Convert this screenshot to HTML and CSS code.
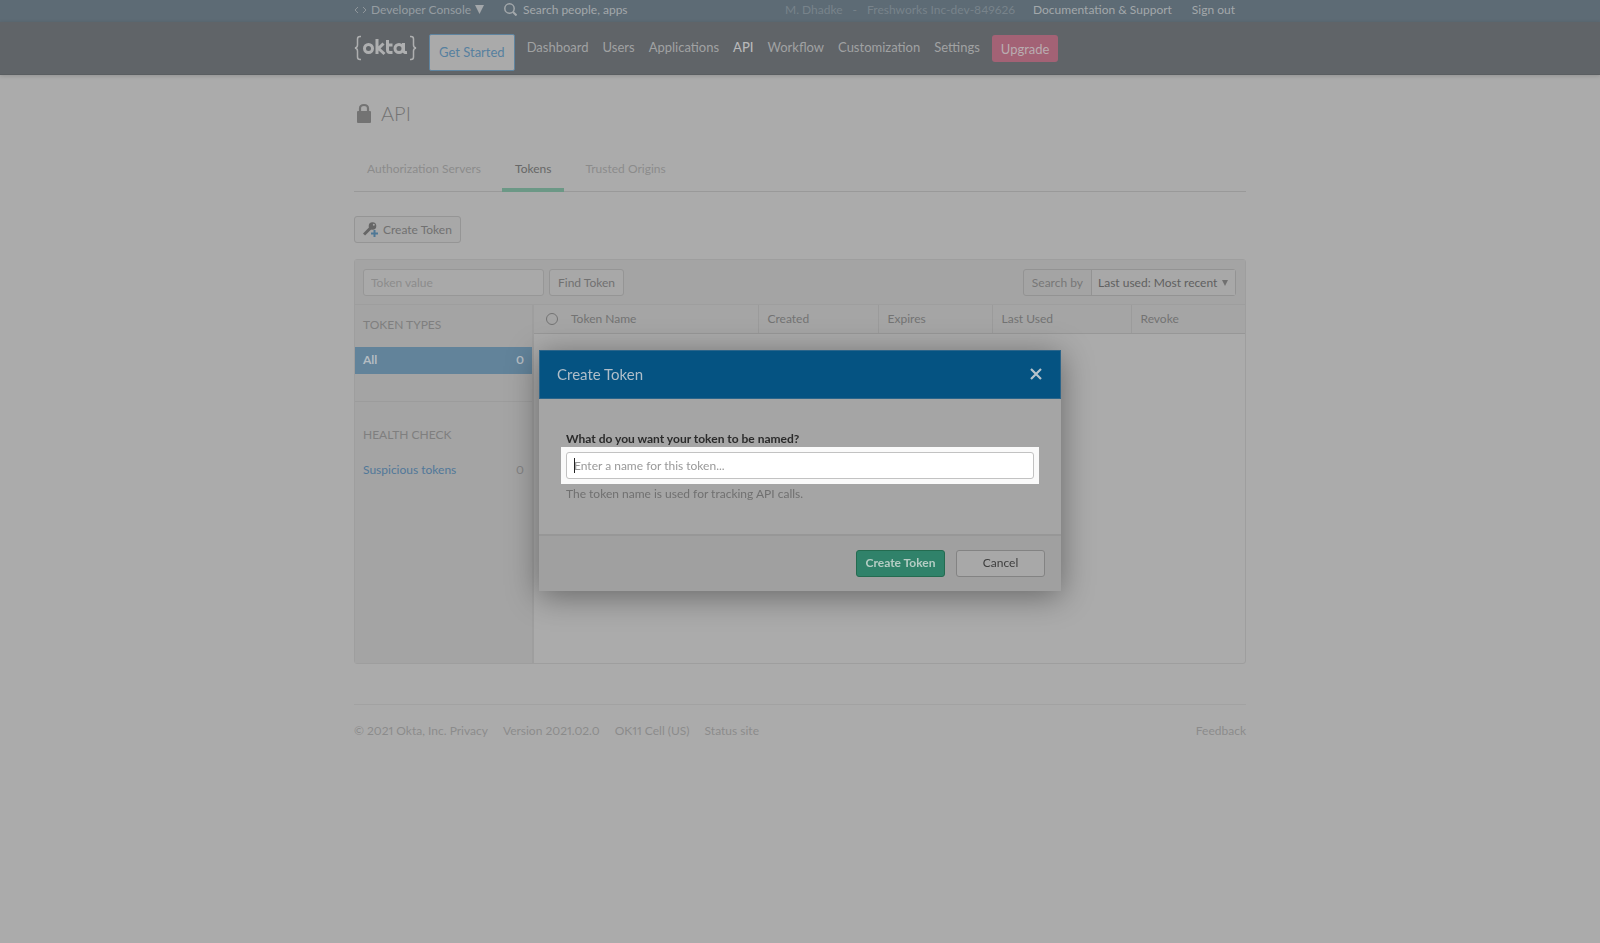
FILE: index.html
```html
<!DOCTYPE html>
<html lang="en">
<head>
    <meta charset="UTF-8">
    <meta name="viewport" content="width=device-width, initial-scale=1.0">
    <title>API - Tokens</title>
    <link rel="stylesheet" href="styles.css">
</head>
<body>
    <header>
        <div class="topbar">
            <div class="container topbar-inner">
                <button class="console">
                    <svg width="13" height="8" viewBox="0 0 13 8"><path d="M4 1 1 4l3 3M9 1l3 3-3 3" fill="none" stroke="#8f969b" stroke-width="1"/></svg>
                    Developer Console
                    <svg width="9" height="9" viewBox="0 0 9 9"><path d="M0 0h9L4.500 9z" fill="#a3a7aa"/></svg>
                </button>
                <label class="search">
                    <svg width="13" height="13" viewBox="0 0 13 13"><circle cx="5.500" cy="5.500" r="4.700" fill="none" stroke="#a3a8ab" stroke-width="1.500"/><path d="M9 9l3.500 3.500" stroke="#a3a8ab" stroke-width="2"/></svg>
                    <input type="text" placeholder="Search people, apps">
                </label>
                <div class="account">
                    <span>M. Dhadke</span>
                    <span>-</span>
                    <span>Freshworks Inc-dev-849626</span>
                </div>
                <a class="support" href="#">Documentation &amp; Support</a>
                <a href="#">Sign out</a>
            </div>
        </div>
        <div class="navbar">
            <nav class="container nav">
                <a class="logo" href="#" aria-label="okta">
                    <svg width="63" height="26" viewBox="0 0 63 26" fill="none" stroke="#aeafb0">
                        <path d="M7 1.500H6Q3.500 1.500 3.500 4V10Q3.500 12.500 1 13Q3.500 13.500 3.500 16V22Q3.500 24.500 6 24.500H7M56 1.500h1Q59.500 1.500 59.500 4V10Q59.500 12.500 62 13Q59.500 13.500 59.500 16V22Q59.500 24.500 57 24.500H56" stroke-width="1.500"/>
                        <g stroke-width="3">
                            <circle cx="14.500" cy="13.500" r="4"/>
                            <path d="M23 4V19M29.500 8.500 24.500 13.500 30.500 19M33.500 5V15Q33.500 17.500 36 17.500H38.500M33.500 10H38.500"/>
                            <circle cx="45" cy="13.500" r="4"/>
                            <path d="M49.500 8V15.500Q49.500 17.800 53 17.500"/>
                        </g>
                    </svg>
                </a>
                <a class="get-started" href="#">Get Started</a>
                <a href="#">Dashboard</a>
                <a href="#">Users</a>
                <a href="#">Applications</a>
                <a class="current" href="#">API</a>
                <a href="#">Workflow</a>
                <a href="#">Customization</a>
                <a href="#">Settings</a>
                <button class="upgrade">Upgrade</button>
            </nav>
        </div>
    </header>

    <main class="container">
        <h1>
            <svg width="14" height="20" viewBox="0 0 14 20"><path d="M3 9V5.500Q3 2 7 2T11 5.500V9" fill="none" stroke="#737373" stroke-width="2.200"/><rect y="8" width="14" height="12" rx="1" fill="#737373"/></svg>
            API
        </h1>
        <div class="tabs">
            <a href="#">Authorization Servers</a>
            <a class="active" href="#">Tokens</a>
            <a href="#">Trusted Origins</a>
        </div>
        <button class="btn create">
            <svg width="15" height="15" viewBox="0 0 15 15"><path d="M1 12.500 7.500 6" stroke="#666" stroke-width="3"/><circle cx="9.500" cy="4" r="3.800" fill="#666"/><circle cx="10.800" cy="2.800" r="1" fill="#a8a8a8"/><path d="M11.500 8v7M8 11.500h7" stroke="#4f7896" stroke-width="2"/></svg>
            Create Token
        </button>

        <section class="panel">
            <div class="toolbar">
                <input class="token-value" type="text" placeholder="Token value" aria-label="Token value">
                <button class="btn">Find Token</button>
                <div class="sort">
                    <label for="sort">Search by</label>
                    <div class="select-wrap">
                        <select id="sort">
                            <option>Last used: Most recent</option>
                        </select>
                        <svg width="6" height="6" viewBox="0 0 6 6"><path d="M0 0h6L3 6z" fill="#707070"/></svg>
                    </div>
                </div>
            </div>
            <div class="content">
                <aside>
                    <div class="group">
                        <h2>TOKEN TYPES</h2>
                        <a class="filter selected" href="#">All <span>0</span></a>
                    </div>
                    <div class="group">
                        <h2>HEALTH CHECK</h2>
                        <a class="filter" href="#">Suspicious tokens <span>0</span></a>
                    </div>
                </aside>
                <div class="results">
                    <table>
                        <colgroup>
                            <col class="col-icon">
                            <col class="col-name">
                            <col class="col-created">
                            <col class="col-expires">
                            <col class="col-used">
                            <col class="col-revoke">
                        </colgroup>
                        <thead>
                            <tr>
                                <th><i class="status"></i></th>
                                <th>Token Name</th>
                                <th>Created</th>
                                <th>Expires</th>
                                <th>Last Used</th>
                                <th>Revoke</th>
                            </tr>
                        </thead>
                    </table>
                </div>
            </div>
        </section>

        <footer>
            <span>© 2021 Okta, Inc. <a href="#">Privacy</a></span>
            <span>Version 2021.02.0</span>
            <span>OK11 Cell (US)</span>
            <a href="#">Status site</a>
            <a class="feedback" href="#">Feedback</a>
        </footer>
    </main>

    <div class="overlay">
        <form class="modal" role="dialog" aria-labelledby="modal-title">
            <div class="modal-header">
                <h2 id="modal-title">Create Token</h2>
                <button type="button" class="close" aria-label="Close">
                    <svg width="12" height="12" viewBox="0 0 12 12"><path d="M1 1l10 10M11 1L1 11" stroke="#b8c3cb" stroke-width="2.200"/></svg>
                </button>
            </div>
            <div class="modal-body">
                <label for="token-name">What do you want your token to be named?</label>
                <div class="field">
                    <input id="token-name" type="text" placeholder="Enter a name for this token...">
                </div>
                <p>The token name is used for tracking API calls.</p>
            </div>
            <div class="modal-footer">
                <button type="button" class="modal-btn primary">Create Token</button>
                <button type="button" class="modal-btn">Cancel</button>
            </div>
        </form>
    </div>
</body>
</html>
```

FILE: styles.css
```css
* {
    box-sizing: border-box;
}
body {
    margin: 0;
    min-height: 100vh;
    background: #ababab;
    color: #777;
    font-family: Lato, sans-serif;
    font-size: 12px;
    font-variant-numeric: proportional-nums;
    line-height: 16px;
}
a {
    color: inherit;
    text-decoration: none;
}
button, input, select {
    font: inherit;
    color: inherit;
    margin: 0;
}
button {
    cursor: pointer;
}
svg {
    display: block;
    flex: none;
}
.container {
    width: 100%;
    max-width: 892px;
    margin: 0 auto;
}

/* header */
.topbar {
    background: #5d6b75;
    color: #a3a8ab;
}
.topbar-inner {
    display: flex;
    align-items: center;
    height: 22px;
    padding: 0 11px 3px 0;
}
.console {
    display: flex;
    align-items: center;
    gap: 4px;
    padding: 0;
    border: none;
    background: none;
    width: 150px;
    color: #969da2;
}
.search {
    display: flex;
    align-items: center;
    gap: 6px;
    width: 281px;
}
.search input {
    width: 200px;
    padding: 0;
    border: none;
    background: none;
}
.search input::placeholder {
    color: #a3a8ab;
    opacity: 1;
}
.account {
    display: flex;
    gap: 10px;
    color: #78838b;
}
.support {
    margin-left: auto;
    margin-right: 20px;
}
.navbar {
    background: #606468;
    border-bottom: 1px solid #5a5e61;
    box-shadow: 0 1px 4px rgba(0, 0, 0, 0.15);
}
.nav {
    display: flex;
    align-items: flex-start;
    gap: 14px;
    height: 52px;
    padding-top: 12px;
    color: #a0a2a3;
    font-size: 13px;
}
.nav a {
    padding-top: 5px;
}
.nav .logo {
    padding-top: 1px;
    margin-right: -2px;
}
.nav .get-started {
    height: 37px;
    padding: 9px 9px 0;
    border: 1px solid #5f849f;
    border-radius: 2px;
    background: #aaa;
    color: #56809f;
    margin-right: -2px;
}
.nav .current {
    color: #b8b9ba;
    font-weight: 500;
}
.upgrade {
    height: 27px;
    padding: 0 9px;
    border: none;
    border-radius: 3px;
    background: #a36275;
    color: #b9adb1;
    margin: 1px 0 0 -2px;
}

/* page */
h1 {
    display: flex;
    align-items: center;
    gap: 10px;
    margin: 0;
    padding: 25px 0 0 3px;
    color: #737373;
    font-size: 20px;
    font-weight: 300;
    line-height: 26px;
}
.tabs {
    display: flex;
    gap: 8px;
    margin-top: 22px;
    border-bottom: 1px solid #999;
    color: #8b8b8b;
}
.tabs a {
    padding: 13px 13px 11px;
    border-bottom: 4px solid transparent;
    margin-bottom: -1px;
}
.tabs .active {
    color: #676767;
    border-color: #6c9886;
}
.btn {
    display: flex;
    align-items: center;
    gap: 5px;
    height: 27px;
    padding: 0 8px;
    border: 1px solid #959595;
    border-radius: 3px;
    background: #a8a8a8;
    color: #717171;
}
.create {
    margin-top: 24px;
}
.panel {
    margin-top: 16px;
    border: 1px solid #9e9e9e;
    border-radius: 3px;
}
.toolbar {
    display: flex;
    gap: 5px;
    height: 45px;
    padding: 9px 9px 9px 8px;
    border-bottom: 1px solid #9e9e9e;
    background: #a4a4a4;
}
.token-value {
    width: 181px;
    height: 27px;
    padding: 0 7px;
    border: 1px solid #979797;
    border-radius: 3px;
    background: #a9a9a9;
}
.token-value::placeholder {
    color: #8c8c8c;
    opacity: 1;
}
.sort {
    display: flex;
    margin-left: auto;
    height: 27px;
    border: 1px solid #939393;
    border-radius: 3px;
    line-height: 25px;
}
.sort label {
    padding: 0 8px;
    border-right: 1px solid #939393;
}
.select-wrap {
    display: grid;
    grid-template-columns: 1fr 13px;
    align-items: center;
    background: #a8a8a8;
}
.select-wrap select {
    grid-area: 1 / 1 / 2 / 3;
    appearance: none;
    height: 25px;
    padding: 0 17px 0 6px;
    border: none;
    background: none;
    color: #606060;
}
.select-wrap svg {
    grid-area: 1 / 2;
    pointer-events: none;
}
.content {
    display: flex;
    min-height: 358px;
}
aside {
    width: 179px;
    flex: none;
    border-right: 2px solid #9e9e9e;
    background: #a4a4a4;
}
.group {
    padding: 12px 0 27px;
}
.group + .group {
    padding-top: 25px;
    border-top: 1px solid #9c9c9c;
}
.group h2 {
    margin: 0 0 14px;
    padding: 0 8px;
    font-size: 12px;
    font-weight: normal;
    color: #7f7f7f;
}
.filter {
    display: flex;
    justify-content: space-between;
    padding: 5px 8px 6px;
    color: #517899;
}
.filter span {
    color: #828282;
}
.selected {
    background: #62839a;
    color: #b4bcc2;
    font-weight: bold;
}
.selected span {
    color: inherit;
}
.results {
    flex: 1;
}
table {
    width: 100%;
    table-layout: fixed;
    border-collapse: collapse;
}
.col-icon { width: 28px; }
.col-name { width: 196px; }
.col-created { width: 120px; }
.col-expires { width: 114px; }
.col-used { width: 139px; }
th {
    height: 28px;
    padding: 0 9px;
    border-bottom: 1px solid #979797;
    border-left: 1px solid #9b9b9b;
    background: #a5a5a5;
    color: #737373;
    font-weight: normal;
    text-align: left;
}
th:nth-child(-n+2) {
    border-left: none;
}
th:first-child {
    padding: 0 0 0 12px;
}
.status {
    display: block;
    width: 12px;
    height: 12px;
    border: 1px solid #737373;
    border-radius: 50%;
}
footer {
    display: flex;
    gap: 15px;
    margin-top: 40px;
    padding-top: 18px;
    border-top: 1px solid #a2a2a2;
    color: #8b8b8b;
}
.feedback {
    margin-left: auto;
}

/* create token dialog */
.overlay {
    position: fixed;
    inset: 0;
    display: flex;
    align-items: center;
    justify-content: center;
    padding-bottom: 3px;
}
.modal {
    width: 522px;
    background: #a5a5a5;
    box-shadow: 0 5px 30px rgba(0, 0, 0, 0.4);
}
.modal-header {
    display: flex;
    align-items: center;
    justify-content: space-between;
    height: 49px;
    padding: 0 18px 0 17px;
    border: 1px solid #2c658a;
    background: #055382;
    color: #b0bec9;
}
.modal-header h2 {
    margin: 0;
    font-size: 15px;
    font-weight: normal;
}
.close {
    padding: 0;
    border: none;
    background: none;
}
.modal-body {
    padding: 32px 27px;
    color: #707070;
}
.modal-body label {
    display: block;
    color: #2b2b2b;
    font-weight: bold;
}
.field {
    position: relative;
    margin: 5px 0 7px;
    background: #fafafa;
    box-shadow: 0 0 0 5px #fafafa;
}
.field input {
    display: block;
    width: 100%;
    height: 27px;
    padding: 0 7px;
    border: 1px solid #c2c2c2;
    border-radius: 3px;
    background: #fff;
}
.field input::placeholder {
    color: #999;
    opacity: 1;
}
/* text cursor */
.field::after {
    content: "";
    position: absolute;
    left: 8px;
    top: 6px;
    width: 1px;
    height: 15px;
    background: #222;
}
.modal-body p {
    margin: 0;
}
.modal-footer {
    display: flex;
    justify-content: flex-end;
    gap: 11px;
    padding: 14px 16px;
    border-top: 2px solid #979797;
    background: #a0a0a0;
}
.modal-btn {
    width: 89px;
    height: 27px;
    padding: 0;
    border: 1px solid #838383;
    border-radius: 3px;
    background: #a8a8a8;
    color: #3e3e3e;
}
.primary {
    border-color: #246b50;
    background: #30826a;
    color: #b5cdc4;
    font-weight: bold;
}
```
